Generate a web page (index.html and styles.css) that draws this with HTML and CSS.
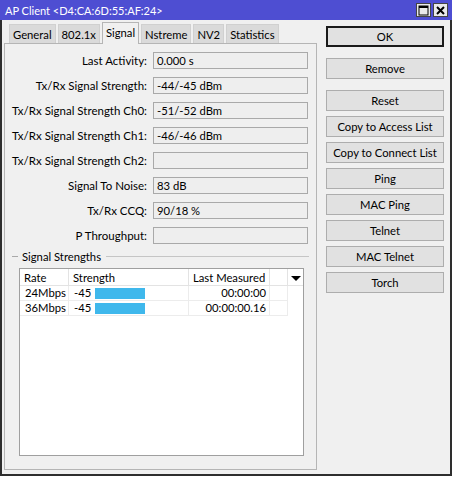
FILE: index.html
```html
<!DOCTYPE html>
<html lang="en">
<head>
    <meta charset="UTF-8">
    <title>AP Client</title>
    <link rel="stylesheet" href="styles.css">
</head>
<body>
    <div class="window">
        <div class="titlebar">
            <span class="title">AP Client &lt;D4:CA:6D:55:AF:24&gt;</span>
            <div class="title-btns">
                <span class="tbtn">
                    <svg width="11" height="11" viewBox="0 0 11 11"><rect x="1" y="1" width="9" height="9" fill="none" stroke="#000" stroke-width="1"/><rect x="1" y="1" width="9" height="2" fill="#000"/></svg>
                </span>
                <span class="tbtn">
                    <svg width="11" height="11" viewBox="0 0 11 11"><path d="M2 2 L9 9 M9 2 L2 9" stroke="#000" stroke-width="2"/></svg>
                </span>
            </div>
        </div>

        <div class="client">
            <div class="left">
                <div class="tabs">
                    <div class="tab">General</div>
                    <div class="tab">802.1x</div>
                    <div class="tab active">Signal</div>
                    <div class="tab">Nstreme</div>
                    <div class="tab">NV2</div>
                    <div class="tab">Statistics</div>
                </div>

                <div class="panel">
                    <div class="fields">
                        <label>Last Activity:</label><div class="box">0.000 s</div>
                        <label>Tx/Rx Signal Strength:</label><div class="box">-44/-45 dBm</div>
                        <label>Tx/Rx Signal Strength Ch0:</label><div class="box">-51/-52 dBm</div>
                        <label>Tx/Rx Signal Strength Ch1:</label><div class="box">-46/-46 dBm</div>
                        <label>Tx/Rx Signal Strength Ch2:</label><div class="box"></div>
                        <label>Signal To Noise:</label><div class="box">83 dB</div>
                        <label>Tx/Rx CCQ:</label><div class="box">90/18 %</div>
                        <label>P Throughput:</label><div class="box"></div>
                    </div>

                    <div class="group-title"><span>Signal Strengths</span></div>

                    <div class="list">
                        <table>
                            <thead>
                                <tr>
                                    <th class="c-rate">Rate</th>
                                    <th class="c-str">Strength</th>
                                    <th class="c-last">Last Measured</th>
                                    <th class="c-blank"></th>
                                    <th class="c-menu"><span class="arrow"></span></th>
                                </tr>
                            </thead>
                            <tbody>
                                <tr>
                                    <td>24Mbps</td>
                                    <td><span class="dbm">-45</span><span class="bar" style="width: 50px"></span></td>
                                    <td class="num">00:00:00</td>
                                    <td></td>
                                    <td class="empty"></td>
                                </tr>
                                <tr>
                                    <td>36Mbps</td>
                                    <td><span class="dbm">-45</span><span class="bar" style="width: 50px"></span></td>
                                    <td class="num">00:00:00.16</td>
                                    <td></td>
                                    <td class="empty"></td>
                                </tr>
                            </tbody>
                        </table>
                    </div>
                </div>
            </div>

            <div class="buttons">
                <button class="btn default">OK</button>
                <button class="btn spaced">Remove</button>
                <button class="btn spaced">Reset</button>
                <button class="btn">Copy to Access List</button>
                <button class="btn">Copy to Connect List</button>
                <button class="btn">Ping</button>
                <button class="btn">MAC Ping</button>
                <button class="btn">Telnet</button>
                <button class="btn">MAC Telnet</button>
                <button class="btn">Torch</button>
            </div>
        </div>
    </div>
</body>
</html>
```

FILE: styles.css
```css
body {
    margin: 0;
    padding: 0;
    background: #ffffff;
    font-family: Lato, "Liberation Sans", sans-serif;
    font-size: 11.25px;
    color: #000;
}

.window {
    width: 452px;
    height: 476px;
    display: flex;
    flex-direction: column;
}

.titlebar {
    height: 20px;
    background: #4e4ed2;
    display: flex;
    align-items: center;
    justify-content: space-between;
    padding: 0 4px 0 5px;
}

.title {
    color: #fff;
    font-size: 11px;
}

.title-btns {
    display: flex;
    gap: 2px;
}

.tbtn {
    width: 15px;
    height: 14px;
    background: #e9e9e9;
    border: 1px solid #444;
    box-sizing: border-box;
    display: flex;
    align-items: center;
    justify-content: center;
}

.tbtn svg {
    display: block;
}

.client {
    flex: 1;
    background: #f0f0f0;
    border: 2px solid #2e2e2e;
    border-top: none;
    display: flex;
}

.left {
    width: 315px;
    padding-top: 4px;
    display: flex;
    flex-direction: column;
}

.tabs {
    display: flex;
    padding-left: 7px;
    height: 19px;
    align-items: flex-end;
    gap: 2px;
}

.tab {
    height: 19px;
    box-sizing: border-box;
    padding: 0 3px;
    background: #dadada;
    border: 1px solid #d0d0d0;
    border-bottom: none;
    display: flex;
    align-items: center;
}

.tab.active {
    background: #f0f0f0;
    border-color: #b5b5b5;
    height: 22px;
    margin-top: -3px;
    margin-bottom: -1px;
    position: relative;
    z-index: 1;
    padding-bottom: 3px;
}

.panel {
    margin-left: 2px;
    height: 427px;
    box-sizing: border-box;
    border: 1px solid #b5b5b5;
    display: flex;
    flex-direction: column;
}

.fields {
    display: grid;
    grid-template-columns: 142px 155px;
    column-gap: 6px;
    row-gap: 8px;
    padding: 8px 0 0 0;
    align-items: center;
}

.fields label {
    text-align: right;
    font-size: 11.5px;
}

.box {
    height: 17px;
    box-sizing: border-box;
    border: 1px solid #a9a9a9;
    background: #eeeeee;
    padding: 0 3px;
    line-height: 15px;
}

.group-title {
    margin: 6px 7px 0 7px;
    display: flex;
    align-items: center;
    color: #000;
}

.group-title::before {
    content: "";
    width: 6px;
    border-top: 1px solid #a9a9a9;
    margin-right: 4px;
}

.group-title::after {
    content: "";
    flex: 1;
    border-top: 1px solid #c5c5c5;
    margin-left: 5px;
}

.list {
    margin: 5px 0 0 14px;
    width: 285px;
    height: 188px;
    box-sizing: border-box;
    border: 1px solid #9f9f9f;
    background: #fff;
}

.list table {
    border-collapse: collapse;
    table-layout: fixed;
    width: 283px;
}

.list th {
    height: 16px;
    font-weight: normal;
    text-align: left;
    padding: 0 0 0 4px;
    border-right: 1px solid #e3e3e3;
    border-bottom: 1px solid #e3e3e3;
    white-space: nowrap;
}

.c-rate { width: 44px; }
.c-str { width: 115px; }
.c-last { width: 76px; }
.c-blank { width: 13px; }
.c-menu { width: 15px; }

.list th.c-menu {
    border-right: none;
    padding: 0;
    text-align: center;
}

.arrow {
    display: inline-block;
    width: 0;
    height: 0;
    border-left: 5px solid transparent;
    border-right: 5px solid transparent;
    border-top: 5px solid #000;
    vertical-align: middle;
}

.list td {
    height: 14px;
    padding: 0 0 0 5px;
    border-right: 1px solid #ececec;
    border-bottom: 1px solid #ececec;
    white-space: nowrap;
    line-height: 14px;
}

.list td.num {
    text-align: right;
    padding: 0 3px 0 0;
}

.list td.empty {
    border: none;
}

.dbm {
    display: inline-block;
    width: 21px;
}

.bar {
    display: inline-block;
    height: 11px;
    background: #3fb8ec;
    vertical-align: -2px;
}

.buttons {
    margin-left: 9px;
    padding-top: 6px;
    display: flex;
    flex-direction: column;
    gap: 5px;
    width: 118px;
}

.btn {
    height: 21px;
    box-sizing: border-box;
    background: #e1e1e1;
    border: 1px solid #adadad;
    font-family: Lato, "Liberation Sans", sans-serif;
    font-size: 11.25px;
    color: #000;
    padding: 0;
}

.btn.default {
    border: 2px solid #1a1a1a;
}

.btn.spaced {
    margin-top: 6px;
}
```
